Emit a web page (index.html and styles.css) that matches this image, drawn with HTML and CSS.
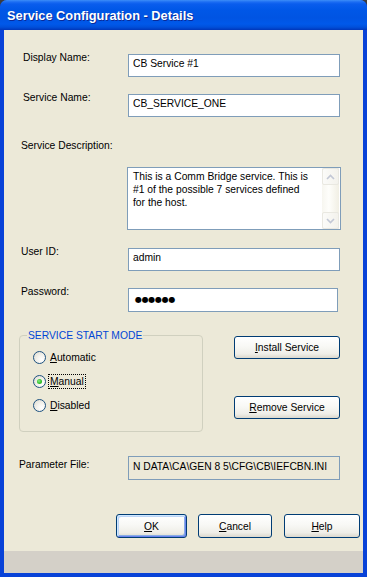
FILE: index.html
```html
<!DOCTYPE html>
<html lang="en">
<head>
<meta charset="utf-8">
<title>Service Configuration - Details</title>
<link rel="stylesheet" href="styles.css">
</head>
<body>
<div class="window">
  <div class="titlebar"><span class="title">Service Configuration - Details</span></div>
  <div class="client">
    <div class="form">
      <div class="row row-display">
        <label class="lbl lbl-a">Display Name:</label>
        <input class="field" type="text" value="CB Service #1" readonly>
      </div>
      <div class="row row-service">
        <label class="lbl lbl-a">Service Name:</label>
        <input class="field" type="text" value="CB_SERVICE_ONE" readonly>
      </div>
      <div class="desc-label">Service Description:</div>
      <div class="memo">
        <div class="memo-text">This is a Comm Bridge service. This is<br>#1 of the possible 7 services defined<br>for the host.</div>
        <div class="vscroll">
          <div class="sbtn"><svg width="9" height="6" viewBox="0 0 9 6"><path d="M1 5 L4.5 1.5 L8 5" fill="none" stroke="#C2C7D5" stroke-width="1.6"/></svg></div>
          <div class="strack"></div>
          <div class="sbtn"><svg width="9" height="6" viewBox="0 0 9 6"><path d="M1 1 L4.5 4.5 L8 1" fill="none" stroke="#C2C7D5" stroke-width="1.6"/></svg></div>
        </div>
      </div>
      <div class="row row-user">
        <label class="lbl">User ID:</label>
        <input class="field" type="text" value="admin" readonly>
      </div>
      <div class="row row-pass">
        <label class="lbl">Password:</label>
        <div class="field field-pass"><span class="dots">●●●●●●</span></div>
      </div>
      <div class="row row-mode">
        <fieldset class="group">
          <legend class="legend">SERVICE START MODE</legend>
          <div class="radios">
            <div class="radio-row"><span class="radio"></span><span class="rlabel"><u>A</u>utomatic</span></div>
            <div class="radio-row"><span class="radio checked"><span class="dot"></span></span><span class="rlabel focus"><u>M</u>anual</span></div>
            <div class="radio-row"><span class="radio"></span><span class="rlabel"><u>D</u>isabled</span></div>
          </div>
        </fieldset>
        <div class="side-buttons">
          <button class="btn btn-wide btn-install"><u>I</u>nstall Service</button>
          <button class="btn btn-wide btn-remove"><u>R</u>emove Service</button>
        </div>
      </div>
      <div class="row row-param">
        <label class="lbl lbl-c">Parameter File:</label>
        <div class="field field-ro">N DATA\CA\GEN 8 5\CFG\CB\IEFCBN.INI</div>
      </div>
      <div class="buttons">
        <button class="btn btn-ok"><u>O</u>K</button>
        <button class="btn btn-cancel"><u>C</u>ancel</button>
        <button class="btn btn-help"><u>H</u>elp</button>
      </div>
    </div>
    <div class="statusbar"></div>
  </div>
</div>
</body>
</html>
```
FILE: styles.css
```css
html, body {
  margin: 0;
  padding: 0;
  background: #3c3c3c;
}
body {
  width: 367px;
  height: 577px;
  overflow: hidden;
  font-family: "Liberation Sans", Arial, sans-serif;
  font-size: 10.3px;
  line-height: 13px;
  color: #000;
}
.window {
  width: 367px;
  height: 577px;
  display: flex;
  flex-direction: column;
  box-sizing: border-box;
  background: #0842D8;
  border-radius: 7px 7px 0 0;
  overflow: hidden;
}
.titlebar {
  height: 30px;
  flex: 0 0 30px;
  box-sizing: border-box;
  padding: 2px 0 0 7px;
  display: flex;
  align-items: center;
  background: linear-gradient(to bottom, #3D8EF8 0px, #1C6DF3 2px, #0A5DED 4px, #0057E7 10px, #0054E3 18px, #0059EA 24px, #0050DB 27px, #003FC6 29px, #0036B8 30px);
}
.title {
  color: #fff;
  font-weight: bold;
  font-size: 12.8px;
  line-height: 16px;
  text-shadow: 1px 1px 0 #0A2A98;
  letter-spacing: 0;
}
.client {
  flex: 1 1 auto;
  margin: 0 4px 4px 4px;
  background: #ECE9D8;
  display: flex;
  flex-direction: column;
  border-left: 0;
}
.form {
  flex: 1 1 auto;
  padding: 24px 0 0 15px;
}
.row {
  display: flex;
  align-items: flex-start;
}
.lbl {
  flex: 0 0 109px;
  box-sizing: border-box;
  padding-left: 2px;
  margin-top: -3px;
}
.lbl-a { padding-left: 4px; }
.lbl-c { padding-left: 0; margin-top: 2px; }
.field {
  box-sizing: border-box;
  width: 212px;
  height: 23px;
  margin: 0;
  padding: 0 4px 4px 4px;
  border: 1px solid #7F9DB9;
  background: #fff;
  font-family: inherit;
  font-size: 10.3px;
  color: #000;
  outline: none;
}
.row-service { margin-top: 17px; }
.desc-label {
  margin-top: 22px;
  padding-left: 2px;
}
.memo {
  margin: 15px 0 0 108px;
  width: 214px;
  height: 63px;
  box-sizing: border-box;
  border: 1px solid #7F9DB9;
  background: #fff;
  display: flex;
}
.memo-text {
  flex: 1 1 auto;
  padding: 2px 0 0 5px;
}
.vscroll {
  flex: 0 0 17px;
  display: flex;
  flex-direction: column;
  margin: 0 1px 0 0;
  background: linear-gradient(to right, #F7F6F0, #FEFEFB 40%, #F1EFE4);
}
.sbtn {
  height: 17px;
  box-sizing: border-box;
  border: 1px solid #E9E8E1;
  border-radius: 2px;
  background: linear-gradient(to right, #FBFBF9, #F3F2EC);
  display: flex;
  align-items: center;
  justify-content: center;
}
.strack { flex: 1 1 auto; }
.row-user { margin-top: 18px; }
.row-pass { margin-top: 17px; }
.field-pass {
  width: 210px;
  height: 24px;
  display: flex;
  align-items: center;
  padding: 0 0 1px 6px;
}
.dots {
  font-family: "DejaVu Sans", sans-serif;
  font-size: 8px;
  letter-spacing: -0.3px;
  line-height: 10px;
}
.row-mode {
  margin-top: 17px;
}
.group {
  margin: 0;
  padding: 0;
  width: 184px;
  box-sizing: border-box;
  border: 1px solid #D0D0BF;
  border-radius: 4px;
  min-width: 0;
}
.legend {
  margin-left: 7px;
  padding: 0 1px;
  color: #0046D5;
  line-height: 13px;
}
.radios {
  padding: 3px 0 14px 13px;
}
.radio-row {
  height: 24px;
  display: flex;
  align-items: center;
}
.radio {
  width: 13px;
  height: 13px;
  box-sizing: border-box;
  border: 1px solid #1C5180;
  border-radius: 50%;
  background: radial-gradient(circle at 70% 70%, #FFFFFF 0%, #F4F3EE 40%, #DCD9CD 100%);
  display: flex;
  align-items: center;
  justify-content: center;
  flex: 0 0 13px;
}
.dot {
  width: 5px;
  height: 5px;
  border-radius: 50%;
  background: radial-gradient(circle at 40% 40%, #8EEB8A 0%, #35C52F 50%, #1C9A1B 100%);
}
.rlabel {
  margin-left: 3px;
  padding: 0 1px;
  border: 1px solid transparent;
  margin-left: 2px;
}
.rlabel.focus {
  border: 1px dotted #000;
}
.side-buttons {
  margin-left: 31px;
  display: flex;
  flex-direction: column;
}
.btn {
  box-sizing: border-box;
  height: 23px;
  margin: 0;
  padding: 0;
  border: 1px solid #003C74;
  border-radius: 3px;
  background: linear-gradient(to bottom, #FFFFFF 0%, #F8F8F5 45%, #EFEEE8 80%, #DCD8CD 100%);
  font-family: inherit;
  font-size: 10.3px;
  color: #000;
  text-align: center;
  line-height: 13px;
}
.btn-wide { width: 106px; }
.btn-install { margin-top: 7px; }
.btn-remove { margin-top: 37px; }
.row-param { margin-top: 24px; }
.field-ro {
  height: 24px;
  background: #ECE9D8;
  padding: 3px 0 0 4px;
  white-space: nowrap;
  overflow: hidden;
}
.buttons {
  margin-top: 34px;
  padding-left: 97px;
  display: flex;
}
.btn-ok {
  width: 71px;
  height: 24px;
  box-shadow: inset 1px 1px 0 #CEE7FF, inset -1px -1px 0 #6982EE, inset 2px 2px 0 #BCD4F6, inset -2px -2px 0 #89ADE4;
}
.btn-cancel { width: 74px; height: 24px; margin-left: 11px; }
.btn-help { width: 76px; height: 24px; margin-left: 12px; }
.statusbar {
  height: 22px;
  flex: 0 0 22px;
  background: #D4D0C8;
}
```
